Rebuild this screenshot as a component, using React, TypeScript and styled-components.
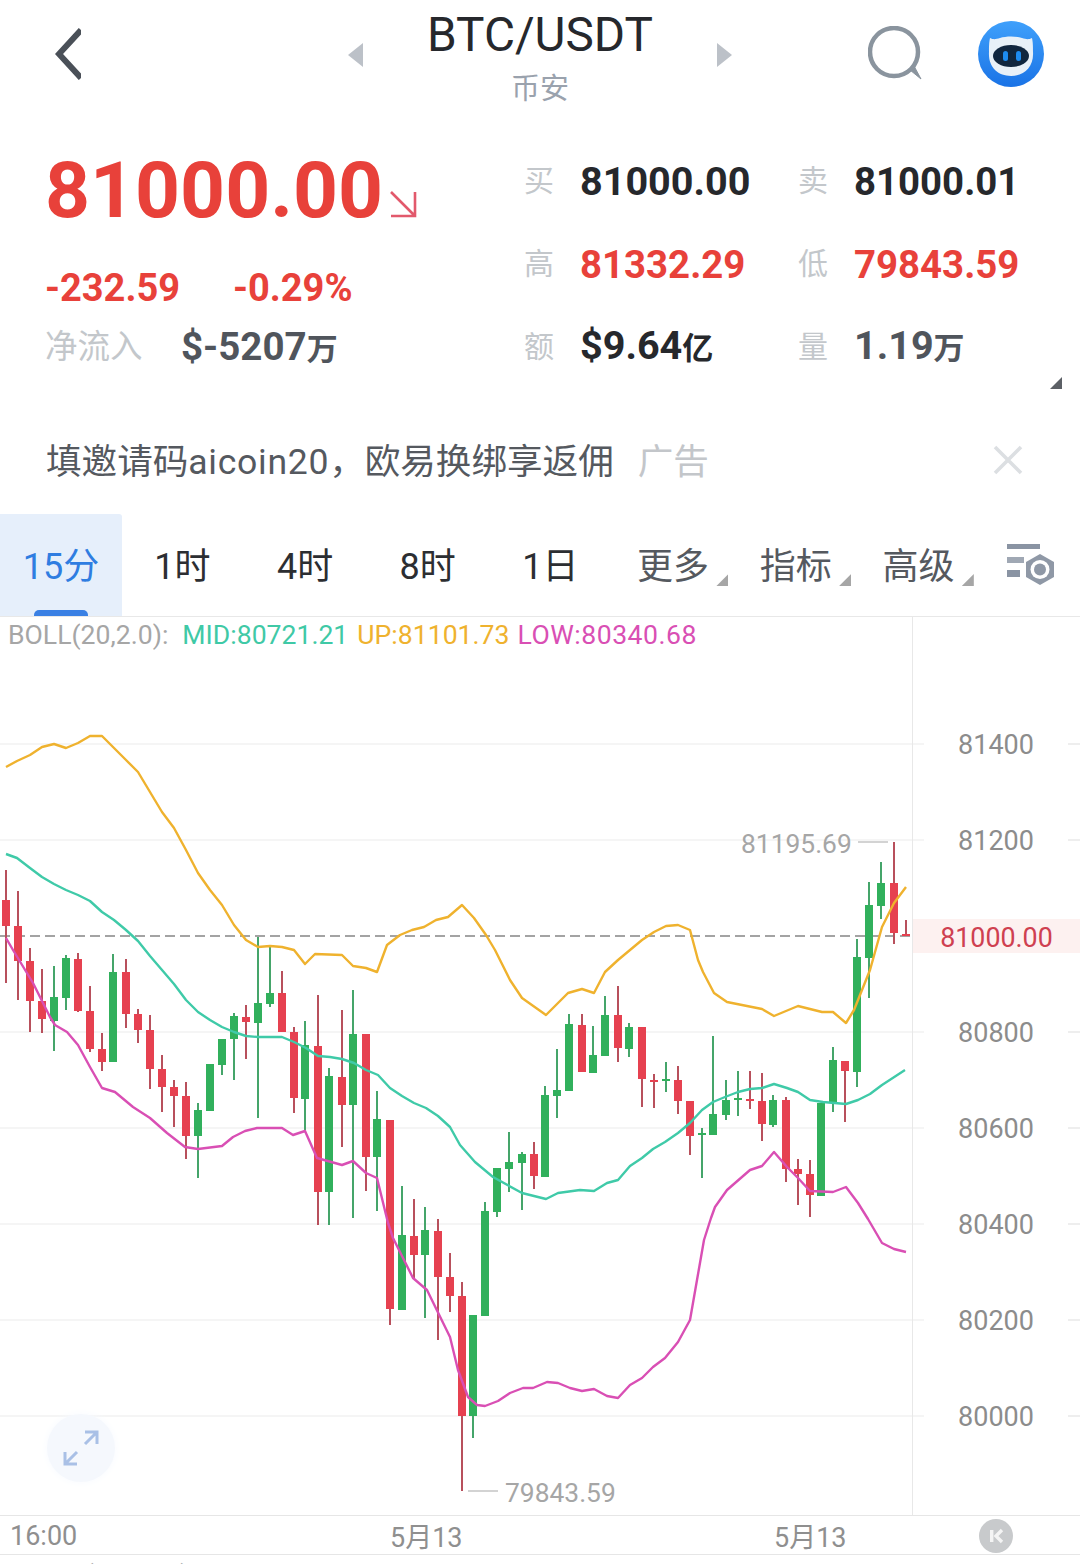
import React from 'react';
import styled, { createGlobalStyle } from 'styled-components';

type Candle = [number, number, number, number, number, 'r' | 'g'];

const RED = '#e8413a';

const GlobalStyle = createGlobalStyle`
  html, body {
    margin: 0;
    padding: 0;
    background: #fff;
  }
  body {
    width: 1080px;
    height: 1564px;
    overflow: hidden;
    font-family: Roboto, 'Noto Sans CJK SC', sans-serif;
  }
`;

const Page = styled.div`
  width: 1080px;
  height: 1564px;
  overflow: hidden;
  background: #fff;
`;

const Header = styled.div`
  height: 110px;
  display: grid;
  grid-template-columns: 1fr auto 1fr;
  align-items: center;
`;

const HeaderLeft = styled.div`
  padding-left: 55px;
  display: flex;
  align-items: center;
  margin-top: -2px;
`;

const HeaderRight = styled.div`
  padding-right: 36px;
  display: flex;
  justify-content: flex-end;
  align-items: center;
  gap: 54px;
  margin-top: -2px;
`;

const TitleGroup = styled.div`
  display: flex;
  align-items: center;
  gap: 65px;
`;

const Arrowhead = styled.div<{ $right?: boolean }>`
  width: 15px;
  height: 24px;
  background: #bcc1c8;
  clip-path: ${(p) =>
    p.$right ? 'polygon(0 0, 100% 50%, 0 100%)' : 'polygon(100% 0, 0 50%, 100% 100%)'};
`;

const TitleBlock = styled.div`
  width: 224px;
  display: flex;
  flex-direction: column;
  align-items: center;
`;

const Title = styled.div`
  font-size: 47.7px;
  line-height: 50px;
  margin-top: 6px;
  color: #26282c;
  white-space: nowrap;
`;

const Exchange = styled.div`
  font-size: 29px;
  line-height: 36px;
  color: #9aa2ad;
  margin-top: 11px;
`;

const Stats = styled.div`
  position: relative;
  height: 290px;
  display: flex;
`;

const PriceCol = styled.div`
  width: 524px;
  padding: 35px 0 0 45px;
  box-sizing: border-box;
`;

const BigPrice = styled.div`
  display: flex;
  align-items: flex-end;
  height: 90px;
  font-size: 78.5px;
  line-height: 90px;
  font-weight: 700;
  color: ${RED};
  white-space: nowrap;
`;

const TrendArrow = styled.svg`
  width: 28px;
  height: 28px;
  margin: 0 0 17px 6px;
`;

const DeltaRow = styled.div`
  display: flex;
  margin-top: 30px;
  height: 46px;
  line-height: 46px;
  font-size: 38px;
  font-weight: 700;
  color: ${RED};
  gap: 53px;
`;

const NetRow = styled.div`
  display: flex;
  margin-top: 13px;
  height: 46px;
  line-height: 46px;
`;

const NetLabel = styled.span`
  width: 136px;
  font-size: 32.5px;
  color: #c3c7cb;
`;

const NetValue = styled.span`
  font-size: 38.5px;
  font-weight: 700;
  color: #50555c;
`;

const Unit = styled.span`
  font-size: 31px;
`;

const QuoteGrid = styled.div`
  display: grid;
  grid-template-columns: 274px 274px;
  grid-auto-rows: 83px;
  padding-top: 30px;
`;

const Quote = styled.div`
  display: flex;
  align-items: center;
`;

const QuoteLabel = styled.span`
  width: 56px;
  font-size: 30px;
  line-height: 40px;
  margin-top: -1px;
  color: #c3c7cb;
`;

const QuoteValue = styled.span<{ $tone?: 'red' | 'dark' | 'grey'; $size: number }>`
  font-size: ${(p) => p.$size}px;
  line-height: 46px;
  font-weight: 700;
  white-space: nowrap;
  color: ${(p) => (p.$tone === 'red' ? RED : p.$tone === 'grey' ? '#50555c' : '#26282c')};
`;

const Corner = styled.div`
  position: absolute;
  right: 18px;
  top: 267px;
  width: 12px;
  height: 12px;
  background: #5c6066;
  clip-path: polygon(100% 0, 100% 100%, 0 100%);
`;

const AdBar = styled.div`
  height: 114px;
  box-sizing: border-box;
  padding: 2px 57px 0 46px;
  display: flex;
  align-items: center;
`;

const AdText = styled.div`
  font-size: 35.6px;
  color: #55595f;
  white-space: nowrap;
`;

const AdLatin = styled.span`
  letter-spacing: 0.7px;
`;

const AdTag = styled.div`
  font-size: 35.6px;
  color: #c3c6ca;
  margin-left: 24px;
  flex: 1;
`;

const AdClose = styled.svg`
  margin-top: 4px;
`;

const TabBar = styled.div`
  height: 103px;
  box-sizing: border-box;
  display: flex;
  border-bottom: 1px solid #e8e8e8;
`;

const Tab = styled.div<{ $active?: boolean; $menu?: boolean }>`
  position: relative;
  width: ${(p) => (p.$active ? '122px' : '122.7px')};
  display: flex;
  align-items: center;
  justify-content: center;
  padding-bottom: 4px;
  padding-right: ${(p) => (p.$active ? '0' : '2px')};
  box-sizing: border-box;
  font-size: 36px;
  white-space: nowrap;
  color: ${(p) => (p.$active ? '#2f7de1' : p.$menu ? '#55595f' : '#2c2e32')};
  background: ${(p) => (p.$active ? '#e6effb' : 'transparent')};
  border-top-right-radius: ${(p) => (p.$active ? '3px' : '0')};

  ${(p) =>
    p.$menu &&
    `&::after {
      content: '';
      position: absolute;
      right: 7px;
      top: 60px;
      width: 12px;
      height: 12px;
      background: #a6a6a6;
      clip-path: polygon(100% 0, 100% 100%, 0 100%);
    }`}
`;

const TabIndicator = styled.div`
  position: absolute;
  left: 34px;
  bottom: 0;
  width: 54px;
  height: 6px;
  background: #3a80e4;
  border-radius: 5px 5px 0 0;
`;

const SettingsSlot = styled.div`
  flex: 1;
  display: flex;
  align-items: center;
  padding-left: 25px;
`;

const ChartArea = styled.div`
  position: relative;
  height: 898px;
`;

const Legend = styled.div`
  position: absolute;
  left: 8px;
  top: 0;
  display: flex;
  font-size: 26.6px;
  line-height: 36px;
  white-space: nowrap;
`;

const LegendItem = styled.span<{ $color: string; $gap: number; $spread?: boolean }>`
  color: ${(p) => p.$color};
  margin-right: ${(p) => p.$gap}px;
  letter-spacing: ${(p) => (p.$spread ? '0.5px' : '0')};
`;

const ChartSvg = styled.svg`
  display: block;
`;

const AxisText = styled.text`
  font-family: Roboto, sans-serif;
  font-size: 27px;
  fill: #8c8c8c;
`;

const NoteText = styled.text`
  font-family: Roboto, sans-serif;
  font-size: 26.4px;
  fill: #a6a6a6;
`;

const TagText = styled.text`
  font-family: Roboto, sans-serif;
  font-size: 26.8px;
  fill: #cf4050;
`;

const ExpandButton = styled.div`
  position: absolute;
  left: 47px;
  top: 797px;
  width: 68px;
  height: 68px;
  border-radius: 50%;
  background: #f5f8fd;
  box-shadow: 0 0 8px #f7fafe;
  display: flex;
  align-items: center;
  justify-content: center;
`;

const TimeAxis = styled.div`
  height: 40px;
  box-sizing: border-box;
  border-top: 1px solid #e6e6e6;
  border-bottom: 1px solid #e6e6e6;
  display: grid;
  grid-template-columns: 380px 384px 205px 1fr;
  align-items: center;
  padding: 0 0 1px 10px;
  font-size: 27px;
  color: #8f8f8f;
`;

const KButton = styled.div`
  width: 34px;
  height: 34px;
  border-radius: 50%;
  background: #c8cacc;
  display: flex;
  align-items: center;
  justify-content: center;
`;

const NextPane = styled.div`
  padding: 4px 0 0 8px;
  font-size: 27px;
  line-height: 34px;
  color: #a8a8a8;
  white-space: nowrap;
`;

const candles: Candle[] = [
  [6, 870, 900, 926, 983, 'r'], [18, 891, 926, 961, 1000, 'r'], [30, 948, 961, 1001, 1032, 'r'],
  [42, 969, 1001, 1019, 1033, 'r'], [54, 966, 997, 1021, 1051, 'g'], [66, 955, 958, 998, 1010, 'g'],
  [78, 953, 959, 1011, 1012, 'r'], [90, 986, 1011, 1049, 1052, 'r'], [102, 1033, 1049, 1062, 1071, 'r'],
  [113, 954, 972, 1062, 1062, 'g'], [126, 959, 972, 1014, 1028, 'r'], [138, 1009, 1014, 1030, 1043, 'r'],
  [150, 1015, 1030, 1069, 1089, 'r'], [162, 1055, 1069, 1087, 1112, 'r'], [174, 1080, 1087, 1096, 1127, 'r'],
  [186, 1082, 1096, 1136, 1159, 'r'], [198, 1103, 1110, 1136, 1178, 'g'], [210, 1064, 1064, 1111, 1111, 'g'],
  [222, 1039, 1039, 1065, 1075, 'g'], [234, 1013, 1016, 1039, 1080, 'g'], [246, 1005, 1017, 1022, 1059, 'r'],
  [258, 937, 1003, 1023, 1118, 'g'], [270, 947, 993, 1004, 1007, 'g'], [282, 971, 993, 1032, 1032, 'r'],
  [294, 1027, 1032, 1098, 1113, 'r'], [305, 1021, 1045, 1099, 1130, 'g'], [318, 995, 1046, 1192, 1225, 'r'],
  [329, 1068, 1076, 1192, 1225, 'g'], [342, 1010, 1077, 1105, 1147, 'r'], [353, 990, 1034, 1105, 1218, 'g'],
  [366, 1034, 1034, 1157, 1191, 'r'], [377, 1091, 1119, 1157, 1211, 'g'], [390, 1120, 1120, 1309, 1325, 'r'],
  [402, 1186, 1235, 1310, 1310, 'g'], [414, 1199, 1236, 1255, 1279, 'r'], [425, 1207, 1230, 1255, 1318, 'g'],
  [438, 1219, 1231, 1277, 1340, 'r'], [450, 1253, 1277, 1296, 1312, 'r'], [462, 1282, 1296, 1416, 1491, 'r'],
  [473, 1315, 1315, 1416, 1438, 'g'], [485, 1202, 1211, 1316, 1316, 'g'], [497, 1168, 1168, 1212, 1217, 'g'],
  [509, 1132, 1162, 1169, 1192, 'g'], [522, 1152, 1154, 1163, 1210, 'g'], [534, 1142, 1154, 1176, 1189, 'r'],
  [545, 1086, 1095, 1177, 1177, 'g'], [557, 1049, 1090, 1096, 1118, 'g'], [569, 1014, 1024, 1091, 1091, 'g'],
  [582, 1014, 1025, 1072, 1072, 'r'], [593, 1026, 1055, 1073, 1073, 'g'], [605, 996, 1015, 1056, 1056, 'g'],
  [618, 986, 1015, 1048, 1062, 'r'], [629, 1023, 1027, 1049, 1057, 'g'], [642, 1027, 1027, 1079, 1107, 'r'],
  [654, 1074, 1080, 1082, 1108, 'r'], [666, 1062, 1079, 1081, 1092, 'g'], [678, 1066, 1080, 1101, 1114, 'r'],
  [690, 1101, 1101, 1136, 1155, 'r'], [702, 1128, 1133, 1135, 1178, 'g'], [713, 1036, 1114, 1135, 1135, 'g'],
  [726, 1080, 1100, 1115, 1120, 'g'], [738, 1071, 1098, 1100, 1116, 'g'], [750, 1071, 1099, 1101, 1109, 'r'],
  [762, 1073, 1101, 1124, 1141, 'r'], [773, 1095, 1100, 1125, 1127, 'g'], [786, 1097, 1100, 1169, 1182, 'r'],
  [798, 1159, 1169, 1174, 1205, 'r'], [810, 1160, 1174, 1195, 1217, 'r'], [821, 1103, 1103, 1196, 1196, 'g'],
  [833, 1047, 1060, 1103, 1112, 'g'], [845, 1061, 1061, 1071, 1122, 'r'], [857, 939, 957, 1072, 1087, 'g'],
  [869, 882, 905, 958, 998, 'g'], [881, 862, 883, 906, 919, 'g'], [894, 842, 883, 933, 944, 'r'],
  [906, 920, 934, 936, 936, 'r'],
];

const upper =
  '6,767 17,761 30,755 42,747 54,744 66,748 78,743 90,736 102,736 114,748 126,760 138,772 150,792 162,812 174,828 186,850 198,873 210,890 222,905 234,925 246,940 258,947 270,946 282,947 294,950 305,964 315,954 342,955 353,966 366,968 377,972 387,945 400,935 412,930 424,927 436,920 448,917 462,905 474,918 486,935 495,950 510,980 522,998 546,1015 568,993 582,989 594,993 605,972 618,960 630,950 642,940 654,932 666,926 678,925 690,930 698,960 703,972 714,993 727,1002 762,1009 774,1016 798,1006 822,1012 833,1012 846,1023 854,1010 870,970 882,927 894,903 906,887';
const middle =
  '6,854 17,858 30,868 42,877 54,884 66,890 78,895 90,901 102,912 114,920 126,930 138,941 150,956 162,970 174,984 186,1000 198,1012 210,1020 222,1027 234,1032 246,1036 258,1037 270,1037 282,1037 294,1042 306,1048 318,1056 330,1057 342,1059 354,1063 366,1070 378,1075 390,1088 402,1096 414,1103 426,1108 438,1116 450,1127 460,1145 475,1162 493,1177 522,1193 546,1199 558,1193 580,1190 594,1191 607,1183 618,1180 630,1166 642,1158 653,1149 665,1142 678,1133 690,1123 702,1110 713,1102 725,1097 738,1092 750,1089 762,1088 774,1084 787,1088 798,1092 810,1100 823,1102 846,1104 858,1100 870,1094 882,1085 905,1070';
const lower =
  '6,938 13,950 33,983 50,1017 55,1025 67,1032 78,1045 90,1067 102,1088 115,1092 133,1107 150,1118 167,1133 185,1147 198,1149 222,1146 233,1137 245,1131 257,1128 282,1128 293,1135 305,1131 317,1158 342,1165 353,1161 366,1173 377,1178 388,1223 393,1238 413,1278 427,1290 450,1337 458,1370 468,1397 477,1405 485,1406 498,1401 510,1393 523,1388 533,1388 547,1382 558,1383 570,1388 582,1391 594,1389 607,1396 618,1398 630,1385 642,1378 653,1367 665,1358 678,1342 690,1320 697,1280 704,1240 711,1218 715,1207 727,1190 750,1170 762,1166 774,1152 787,1167 798,1178 810,1191 833,1192 846,1187 858,1203 868,1219 882,1243 894,1249 906,1252';

const axisLevels = [
  { y: 744, label: '81400' },
  { y: 840, label: '81200' },
  { y: 1032, label: '80800' },
  { y: 1128, label: '80600' },
  { y: 1224, label: '80400' },
  { y: 1320, label: '80200' },
  { y: 1416, label: '80000' },
];

const quotes = [
  { label: '买', value: '81000.00', size: 39.6 },
  { label: '卖', value: '81000.01', size: 38.4 },
  { label: '高', value: '81332.29', tone: 'red' as const, size: 38.4 },
  { label: '低', value: '79843.59', tone: 'red' as const, size: 38.4 },
  { label: '额', value: '$9.64', unit: '亿', size: 39.6 },
  { label: '量', value: '1.19', unit: '万', tone: 'grey' as const, size: 39.6 },
];

const Chart = () => (
  <ChartSvg width={1080} height={898} viewBox="0 617 1080 898">
    {axisLevels.map((l) => (
      <g key={l.y}>
        <line x1={0} x2={924} y1={l.y} y2={l.y} stroke="#f2f2f2" strokeWidth={1.5} />
        <line x1={1068} x2={1080} y1={l.y} y2={l.y} stroke="#e8e8e8" strokeWidth={1.5} />
        <AxisText x={996} y={l.y + 9.5} textAnchor="middle">
          {l.label}
        </AxisText>
      </g>
    ))}
    <line x1={912.5} x2={912.5} y1={617} y2={1515} stroke="#e8e8e8" strokeWidth={1} />
    <rect x={913} y={919} width={167} height={34} fill="#fdf1f0" />
    <TagText x={996.5} y={946.5} textAnchor="middle">
      81000.00
    </TagText>
    <line x1={0} x2={912} y1={936} y2={936} stroke="#a3a3a3" strokeWidth={2} strokeDasharray="10 5" />
    {candles.map(([x, wt, bt, bb, wb, c]) => (
      <g key={x}>
        <rect x={x - 1} y={wt} width={2} height={wb - wt} fill={c === 'r' ? '#b8505c' : '#45a56a'} />
        <rect x={x - 4} y={bt} width={8} height={bb - bt} fill={c === 'r' ? '#e64150' : '#31b05c'} />
      </g>
    ))}
    <polyline points={upper} fill="none" stroke="#efb22e" strokeWidth={2.4} strokeLinejoin="round" />
    <polyline points={middle} fill="none" stroke="#3fcaa8" strokeWidth={2.4} strokeLinejoin="round" />
    <polyline points={lower} fill="none" stroke="#d94fb4" strokeWidth={2.4} strokeLinejoin="round" />
    <NoteText x={741} y={853}>
      81195.69
    </NoteText>
    <line x1={858} x2={888} y1={842} y2={842} stroke="#c4c4c4" strokeWidth={1.5} />
    <line x1={468} x2={498} y1={1491} y2={1491} stroke="#c4c4c4" strokeWidth={1.5} />
    <NoteText x={505} y={1502}>
      79843.59
    </NoteText>
  </ChartSvg>
);

export default function App() {
  return (
    <Page>
      <GlobalStyle />
      <Header>
        <HeaderLeft>
          <svg width="26" height="52" viewBox="0 0 26 52">
            <path d="M26 2 L4 26 L26 50" fill="none" stroke="#4a5058" strokeWidth="6" />
          </svg>
        </HeaderLeft>
        <TitleGroup>
          <Arrowhead />
          <TitleBlock>
            <Title>BTC/USDT</Title>
            <Exchange>币安</Exchange>
          </TitleBlock>
          <Arrowhead $right />
        </TitleGroup>
        <HeaderRight>
          <svg width="56" height="56" viewBox="0 0 56 56">
            <circle cx="26" cy="26" r="24" fill="none" stroke="#8a949e" strokeWidth="4.5" />
            <path d="M42 44 L53 53 L46 40 Z" fill="#8a949e" stroke="#8a949e" strokeWidth="1" />
          </svg>
          <svg width="66" height="66" viewBox="0 0 66 66">
            <defs>
              <linearGradient id="avatarFill" x1="0" y1="0" x2="0" y2="1">
                <stop offset="0" stopColor="#3fa0fb" />
                <stop offset="1" stopColor="#1a73e6" />
              </linearGradient>
            </defs>
            <circle cx="33" cy="33" r="33" fill="url(#avatarFill)" />
            <path
              d="M12 17 C16 19 18 18 22 17 C28 15 38 15 44 17 C48 18 50 19 54 17 C55 22 55 25 55 31 C56 46 46 55 33 55 C20 55 10 46 11 31 C11 25 11 22 12 17 Z"
              fill="#e8f0f8"
            />
            <ellipse cx="33" cy="35" rx="18" ry="11" fill="#10263f" />
            <rect x="25" y="30" width="5" height="10" rx="2.5" fill="#1d8bf0" />
            <rect x="38" y="30" width="5" height="10" rx="2.5" fill="#1d8bf0" />
          </svg>
        </HeaderRight>
      </Header>

      <Stats>
        <PriceCol>
          <BigPrice>
            81000.00
            <TrendArrow viewBox="0 0 28 28">
              <path d="M2 2 L25 25 M2 26 H26 V2" fill="none" stroke="#e2596c" strokeWidth="2.6" />
            </TrendArrow>
          </BigPrice>
          <DeltaRow>
            <span>-232.59</span>
            <span>-0.29%</span>
          </DeltaRow>
          <NetRow>
            <NetLabel>净流入</NetLabel>
            <NetValue>
              $-5207<Unit>万</Unit>
            </NetValue>
          </NetRow>
        </PriceCol>
        <QuoteGrid>
          {quotes.map((q) => (
            <Quote key={q.label}>
              <QuoteLabel>{q.label}</QuoteLabel>
              <QuoteValue $tone={q.tone} $size={q.size}>
                {q.value}
                {q.unit && <Unit>{q.unit}</Unit>}
              </QuoteValue>
            </Quote>
          ))}
        </QuoteGrid>
        <Corner />
      </Stats>

      <AdBar>
        <AdText>
          填邀请码<AdLatin>aicoin20</AdLatin>，欧易换绑享返佣
        </AdText>
        <AdTag>广告</AdTag>
        <AdClose width="30" height="30" viewBox="0 0 30 30">
          <path d="M2 2 L28 28 M28 2 L2 28" stroke="#dcdfe2" strokeWidth="3.6" />
        </AdClose>
      </AdBar>

      <TabBar>
        <Tab $active>
          15分
          <TabIndicator />
        </Tab>
        <Tab>1时</Tab>
        <Tab>4时</Tab>
        <Tab>8时</Tab>
        <Tab>1日</Tab>
        <Tab $menu>更多</Tab>
        <Tab $menu>指标</Tab>
        <Tab $menu>高级</Tab>
        <SettingsSlot>
          <svg width="50" height="44" viewBox="0 0 50 44">
            <rect x="1" y="1" width="33" height="5" fill="#8a94a3" />
            <rect x="1" y="14" width="17" height="6" fill="#a0a8b4" />
            <rect x="1" y="27" width="13" height="7" fill="#8a94a3" />
            <path d="M34 11 L48 19 L48 34 L34 42 L20 34 L20 19 Z" fill="#8f98a6" />
            <circle cx="34" cy="26.5" r="9.5" fill="#fff" />
            <circle cx="34" cy="26.5" r="6" fill="#8f98a6" />
          </svg>
        </SettingsSlot>
      </TabBar>

      <ChartArea>
        <Chart />
        <Legend>
          <LegendItem $color="#a6a6a6" $gap={14}>
            BOLL(20,2.0):
          </LegendItem>
          <LegendItem $color="#3fc9a6" $gap={9}>
            MID:80721.21
          </LegendItem>
          <LegendItem $color="#efb22e" $gap={8}>
            UP:81101.73
          </LegendItem>
          <LegendItem $color="#d94fb4" $gap={0} $spread>
            LOW:80340.68
          </LegendItem>
        </Legend>
        <ExpandButton>
          <svg width="40" height="40" viewBox="0 0 40 40">
            <path
              d="M24 4 H36 V16 M36 4 L24 16 M4 24 V36 H16 M4 36 L16 24"
              fill="none"
              stroke="#a9c0e6"
              strokeWidth="3"
            />
          </svg>
        </ExpandButton>
      </ChartArea>

      <TimeAxis>
        <span>16:00</span>
        <span>5月13</span>
        <span>5月13</span>
        <KButton>
          <svg width="18" height="18" viewBox="0 0 18 18">
            <rect x="3" y="3" width="3.4" height="12" fill="#f4f4f4" />
            <path d="M15 3 L9 9 L15 15" fill="none" stroke="#f4f4f4" strokeWidth="3.4" />
          </svg>
        </KButton>
      </TimeAxis>
      <NextPane>MACD(12,26,9)</NextPane>
    </Page>
  );
}
